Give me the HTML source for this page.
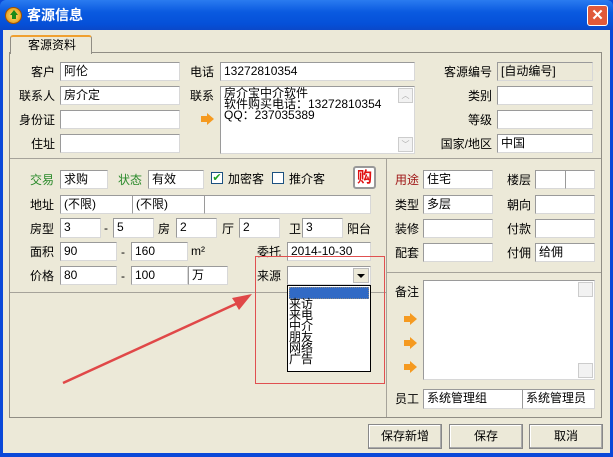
<!DOCTYPE html>
<html><head><meta charset="utf-8"><style>
*{margin:0;padding:0;box-sizing:border-box}
body{width:613px;height:457px;overflow:hidden;background:#0a48d8;font-family:"Liberation Sans","Noto Sans CJK SC","WenQuanYi Zen Hei",sans-serif;font-size:12px;color:#000;position:relative}
.win{position:absolute;left:3px;top:30px;width:607px;height:423px;background:#ece9d8}
.title{position:absolute;left:0;top:0;width:613px;height:30px;background:linear-gradient(#2a7bf0,#0a5ae0 40%,#0550d8 80%,#0a48c8);border-radius:6px 6px 0 0}
.a{position:absolute;white-space:nowrap;line-height:14px}
.i{position:absolute;background:#fff;border:1px solid #9a9a9a;border-right-color:#d8d8d8;border-bottom-color:#d8d8d8;padding:1px 3px;line-height:15px;white-space:nowrap;overflow:hidden;font-size:12px}
.r{text-align:right}
.b{position:absolute;border:1px solid #888;background:#ece9d8;text-align:center;line-height:23px;box-shadow:inset -1px -1px #aaa, inset 1px 1px #fff}
.arr{position:absolute;width:0;height:0}
.line{position:absolute;background:#a6a39a}
</style></head><body>
<div class="title">
 <div style="position:absolute;left:5px;top:7px;width:17px;height:17px;border-radius:50%;background:radial-gradient(#ffe27a,#e08a00);border:1px solid #a05000"></div>
 <div style="position:absolute;left:10px;top:10px;width:0;height:0;border-left:4px solid transparent;border-right:4px solid transparent;border-bottom:5px solid #1a8a1a"></div>
 <div style="position:absolute;left:12px;top:15px;width:4px;height:4px;background:#1a8a1a"></div>
 <div class="a" style="left:27px;top:8px;color:#fff;font-weight:bold;font-size:14px">客源信息</div>
 <div style="position:absolute;left:587px;top:5px;width:21px;height:21px;background:#e0593a;border:1px solid #fff;border-radius:3px;color:#fff;text-align:center;line-height:19px;font-size:15px;font-weight:bold">✕</div>
</div>
<div class="win">
 <!-- tab -->
 <div style="position:absolute;left:6px;top:22px;width:593px;height:366px;border:1px solid #908d84"></div>
 <div style="position:absolute;left:7px;top:5px;width:82px;height:19px;background:#ece9d8;border:1px solid #908d84;border-bottom:none;border-top:2px solid #f0a030;border-radius:3px 3px 0 0"></div>
 <div class="a" style="left:25px;top:8px">客源资料</div>

 <div class="line" style="left:7px;top:128px;width:591px;height:1px"></div>
 <div class="line" style="left:383px;top:128px;width:1px;height:259px"></div>
 <div class="line" style="left:7px;top:262px;width:376px;height:1px"></div>
 <div class="line" style="left:384px;top:242px;width:214px;height:1px"></div>
</div>
<div style="position:absolute;left:0;top:0;width:613px;height:457px">
 <!-- top left -->
 <div class="a r" style="left:5px;top:65px;width:50px">客户</div><div class="i" style="left:60px;top:62px;width:120px;height:19px">阿伦</div>
 <div class="a r" style="left:5px;top:89px;width:50px">联系人</div><div class="i" style="left:60px;top:86px;width:120px;height:19px">房介定</div>
 <div class="a r" style="left:5px;top:113px;width:50px">身份证</div><div class="i" style="left:60px;top:110px;width:120px;height:19px"></div>
 <div class="a r" style="left:5px;top:137px;width:50px">住址</div><div class="i" style="left:60px;top:134px;width:120px;height:19px"></div>
 <div class="a" style="left:190px;top:65px">电话</div><div class="i" style="left:220px;top:62px;width:195px;height:19px">13272810354</div>
 <div class="a" style="left:190px;top:89px">联系</div>
 <div class="i" style="left:220px;top:86px;width:195px;height:68px;line-height:11px;white-space:pre">房介宝中介软件
软件购买电话：13272810354
QQ：237035389</div>
 <div style="position:absolute;left:398px;top:88px;width:15px;height:15px;border:1px solid #ccc;background:#f2f2f2;font-size:8px;color:#aaa;text-align:center;line-height:13px">︿</div>
 <div style="position:absolute;left:398px;top:137px;width:15px;height:15px;border:1px solid #ccc;background:#f2f2f2;font-size:8px;color:#aaa;text-align:center;line-height:13px">﹀</div>
 <div style="position:absolute;left:201px;top:116px;width:6px;height:6px;background:#f59a20"></div><div class="arr" style="left:207px;top:113px;border-top:6px solid transparent;border-bottom:6px solid transparent;border-left:7px solid #f59a20"></div>
 <div class="a r" style="left:420px;top:65px;width:72px">客源编号</div><div class="i" style="left:497px;top:62px;width:96px;height:19px;background:#ece9d8">[自动编号]</div>
 <div class="a r" style="left:420px;top:89px;width:72px">类别</div><div class="i" style="left:497px;top:86px;width:96px;height:19px"></div>
 <div class="a r" style="left:420px;top:113px;width:72px">等级</div><div class="i" style="left:497px;top:110px;width:96px;height:19px"></div>
 <div class="a r" style="left:420px;top:137px;width:72px">国家/地区</div><div class="i" style="left:497px;top:134px;width:96px;height:19px">中国</div>

 <!-- middle left -->
 <div class="a" style="left:30px;top:173px;color:#2a8a2a">交易</div><div class="i" style="left:60px;top:170px;width:48px;height:19px">求购</div>
 <div class="a" style="left:118px;top:173px;color:#2a8a2a">状态</div><div class="i" style="left:148px;top:170px;width:56px;height:19px">有效</div>
 <div style="position:absolute;left:211px;top:172px;width:12px;height:12px;border:1px solid #1c5180;background:#fff;color:#21a121;font-size:11px;line-height:10px;text-align:center">✔</div>
 <div class="a" style="left:228px;top:172px">加密客</div>
 <div style="position:absolute;left:272px;top:172px;width:12px;height:12px;border:1px solid #1c5180;background:#fff"></div>
 <div class="a" style="left:289px;top:172px">推介客</div>
 <div style="position:absolute;left:353px;top:166px;width:23px;height:23px;border:2px solid #999;border-radius:3px;background:#fff;color:#e01010;font-weight:bold;font-size:15px;text-align:center;line-height:19px">购</div>
 <div class="a" style="left:30px;top:198px">地址</div>
 <div class="i" style="left:60px;top:195px;width:73px;height:19px">(不限)</div>
 <div class="i" style="left:132px;top:195px;width:73px;height:19px">(不限)</div>
 <div class="i" style="left:204px;top:195px;width:167px;height:19px"></div>
 <div class="a" style="left:30px;top:222px">房型</div>
 <div class="i" style="left:60px;top:218px;width:41px;height:20px">3</div><div class="a" style="left:104px;top:221px">-</div>
 <div class="i" style="left:113px;top:218px;width:41px;height:20px">5</div><div class="a" style="left:158px;top:222px">房</div>
 <div class="i" style="left:176px;top:218px;width:41px;height:20px">2</div><div class="a" style="left:222px;top:222px">厅</div>
 <div class="i" style="left:239px;top:218px;width:41px;height:20px">2</div><div class="a" style="left:289px;top:222px">卫</div>
 <div class="i" style="left:302px;top:218px;width:41px;height:20px">3</div><div class="a" style="left:347px;top:222px">阳台</div>
 <div class="a" style="left:30px;top:245px">面积</div>
 <div class="i" style="left:60px;top:242px;width:57px;height:19px">90</div><div class="a" style="left:121px;top:245px">-</div>
 <div class="i" style="left:131px;top:242px;width:57px;height:19px">160</div><div class="a" style="left:191px;top:244px">m²</div>
 <div class="a" style="left:257px;top:245px">委托</div><div class="i" style="left:287px;top:242px;width:84px;height:19px">2014-10-30</div>
 <div class="a" style="left:30px;top:269px">价格</div>
 <div class="i" style="left:60px;top:266px;width:57px;height:19px">80</div><div class="a" style="left:121px;top:269px">-</div>
 <div class="i" style="left:131px;top:266px;width:57px;height:19px">100</div>
 <div class="i" style="left:188px;top:266px;width:40px;height:19px">万</div>
 <div class="a" style="left:257px;top:269px">来源</div>
 <div class="i" style="left:287px;top:266px;width:84px;height:19px"></div>
 <div style="position:absolute;left:353px;top:268px;width:16px;height:15px;background:#ece9d8;border:1px solid #bbb"></div>
 <div class="arr" style="left:357px;top:274px;border-left:4px solid transparent;border-right:4px solid transparent;border-top:4px solid #000"></div>
 <div style="position:absolute;left:287px;top:285px;width:84px;height:87px;background:#fff;border:1px solid #000"></div>
 <div style="position:absolute;left:289px;top:287px;width:80px;height:12px;background:#316ac5;border:1px dotted #888"></div>
 <div class="a" style="left:289px;top:299px;line-height:11px;white-space:pre;font-size:12px">来访
来电
中介
朋友
网络
广告</div>
 <div style="position:absolute;left:255px;top:256px;width:130px;height:128px;border:1px solid #e05050"></div>
 <svg style="position:absolute;left:0;top:0" width="613" height="457"><polygon points="63,383 236,304 232,298 252,294 239,310 236,305" fill="#e04848"/><line x1="63" y1="383" x2="240" y2="302" stroke="#e04848" stroke-width="2.5"/></svg>

 <!-- right -->
 <div class="a" style="left:395px;top:173px;color:#a01818">用途</div><div class="i" style="left:423px;top:170px;width:70px;height:19px">住宅</div>
 <div class="a" style="left:507px;top:173px">楼层</div><div class="i" style="left:535px;top:170px;width:31px;height:19px"></div><div class="i" style="left:565px;top:170px;width:30px;height:19px"></div>
 <div class="a" style="left:395px;top:198px">类型</div><div class="i" style="left:423px;top:195px;width:70px;height:19px">多层</div>
 <div class="a" style="left:507px;top:198px">朝向</div><div class="i" style="left:535px;top:195px;width:60px;height:19px"></div>
 <div class="a" style="left:395px;top:222px">装修</div><div class="i" style="left:423px;top:219px;width:70px;height:19px"></div>
 <div class="a" style="left:507px;top:222px">付款</div><div class="i" style="left:535px;top:219px;width:60px;height:19px"></div>
 <div class="a" style="left:395px;top:246px">配套</div><div class="i" style="left:423px;top:243px;width:70px;height:19px"></div>
 <div class="a" style="left:507px;top:246px">付佣</div><div class="i" style="left:535px;top:243px;width:60px;height:19px">给佣</div>
 <div class="a" style="left:395px;top:285px">备注</div>
 <div class="i" style="left:423px;top:280px;width:172px;height:100px"></div>
 <div style="position:absolute;left:578px;top:282px;width:15px;height:15px;border:1px solid #ccc;background:#f2f2f2"></div>
 <div style="position:absolute;left:578px;top:363px;width:15px;height:15px;border:1px solid #ccc;background:#f2f2f2"></div>
 <div style="position:absolute;left:404px;top:316px;width:6px;height:6px;background:#f59a20"></div><div class="arr" style="left:410px;top:313px;border-top:6px solid transparent;border-bottom:6px solid transparent;border-left:7px solid #f59a20"></div>
 <div style="position:absolute;left:404px;top:340px;width:6px;height:6px;background:#f59a20"></div><div class="arr" style="left:410px;top:337px;border-top:6px solid transparent;border-bottom:6px solid transparent;border-left:7px solid #f59a20"></div>
 <div style="position:absolute;left:404px;top:364px;width:6px;height:6px;background:#f59a20"></div><div class="arr" style="left:410px;top:361px;border-top:6px solid transparent;border-bottom:6px solid transparent;border-left:7px solid #f59a20"></div>
 <div class="a" style="left:395px;top:392px">员工</div>
 <div class="i" style="left:423px;top:389px;width:100px;height:20px">系统管理组</div>
 <div class="i" style="left:522px;top:389px;width:73px;height:20px">系统管理员</div>

 <div class="b" style="left:368px;top:424px;width:74px;height:25px">保存新增</div>
 <div class="b" style="left:449px;top:424px;width:74px;height:25px">保存</div>
 <div class="b" style="left:529px;top:424px;width:74px;height:25px">取消</div>
</div>
</body></html>
